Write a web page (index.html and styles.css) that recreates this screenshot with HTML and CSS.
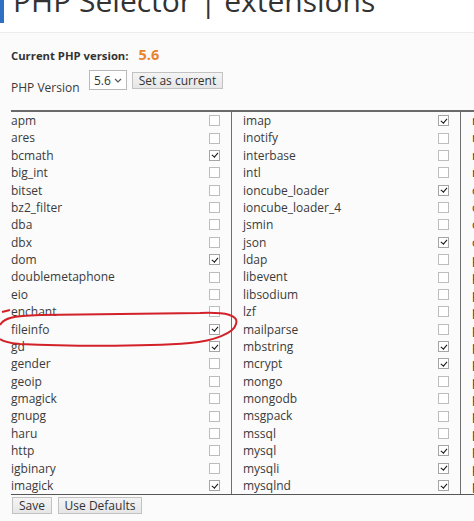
FILE: index.html
```html
<!DOCTYPE html>
<html>
<head>
<meta charset="utf-8">
<link rel="stylesheet" href="styles.css">
</head>
<body>
<header class="page-head">
  <div class="head-bar"></div>
  <h1 class="title">PHP Selector | extensions</h1>
</header>
<main class="content">
  <div class="current">
    <span class="current-label">Current PHP version:</span>
    <span class="current-value">5.6</span>
  </div>
  <div class="version-row">
    <label class="version-label">PHP Version</label>
    <div class="select">
      <span>5.6</span>
      <svg class="chev" width="8" height="5" viewBox="0 0 8 5"><path d="M1 1 L4 4 L7 1" fill="none" stroke="#555" stroke-width="1.2"/></svg>
    </div>
    <button class="btn set-btn">Set as current</button>
  </div>

  <div class="ext-table">
    <div class="ext-col col-first">
      <div class="ext-row"><span class="name">apm</span><span class="cb"></span></div>
      <div class="ext-row"><span class="name">ares</span><span class="cb"></span></div>
      <div class="ext-row"><span class="name">bcmath</span><span class="cb on"></span></div>
      <div class="ext-row"><span class="name">big_int</span><span class="cb"></span></div>
      <div class="ext-row"><span class="name">bitset</span><span class="cb"></span></div>
      <div class="ext-row"><span class="name">bz2_filter</span><span class="cb"></span></div>
      <div class="ext-row"><span class="name">dba</span><span class="cb"></span></div>
      <div class="ext-row"><span class="name">dbx</span><span class="cb"></span></div>
      <div class="ext-row"><span class="name">dom</span><span class="cb on"></span></div>
      <div class="ext-row"><span class="name">doublemetaphone</span><span class="cb"></span></div>
      <div class="ext-row"><span class="name">eio</span><span class="cb"></span></div>
      <div class="ext-row"><span class="name">enchant</span><span class="cb"></span></div>
      <div class="ext-row"><span class="name">fileinfo</span><span class="cb on"></span></div>
      <div class="ext-row"><span class="name">gd</span><span class="cb on"></span></div>
      <div class="ext-row"><span class="name">gender</span><span class="cb"></span></div>
      <div class="ext-row"><span class="name">geoip</span><span class="cb"></span></div>
      <div class="ext-row"><span class="name">gmagick</span><span class="cb"></span></div>
      <div class="ext-row"><span class="name">gnupg</span><span class="cb"></span></div>
      <div class="ext-row"><span class="name">haru</span><span class="cb"></span></div>
      <div class="ext-row"><span class="name">http</span><span class="cb"></span></div>
      <div class="ext-row"><span class="name">igbinary</span><span class="cb"></span></div>
      <div class="ext-row"><span class="name">imagick</span><span class="cb on"></span></div>
    </div>
    <div class="ext-col">
      <div class="ext-row"><span class="name">imap</span><span class="cb on"></span></div>
      <div class="ext-row"><span class="name">inotify</span><span class="cb"></span></div>
      <div class="ext-row"><span class="name">interbase</span><span class="cb"></span></div>
      <div class="ext-row"><span class="name">intl</span><span class="cb"></span></div>
      <div class="ext-row"><span class="name">ioncube_loader</span><span class="cb on"></span></div>
      <div class="ext-row"><span class="name">ioncube_loader_4</span><span class="cb"></span></div>
      <div class="ext-row"><span class="name">jsmin</span><span class="cb"></span></div>
      <div class="ext-row"><span class="name">json</span><span class="cb on"></span></div>
      <div class="ext-row"><span class="name">ldap</span><span class="cb"></span></div>
      <div class="ext-row"><span class="name">libevent</span><span class="cb"></span></div>
      <div class="ext-row"><span class="name">libsodium</span><span class="cb"></span></div>
      <div class="ext-row"><span class="name">lzf</span><span class="cb"></span></div>
      <div class="ext-row"><span class="name">mailparse</span><span class="cb"></span></div>
      <div class="ext-row"><span class="name">mbstring</span><span class="cb on"></span></div>
      <div class="ext-row"><span class="name">mcrypt</span><span class="cb on"></span></div>
      <div class="ext-row"><span class="name">mongo</span><span class="cb"></span></div>
      <div class="ext-row"><span class="name">mongodb</span><span class="cb"></span></div>
      <div class="ext-row"><span class="name">msgpack</span><span class="cb"></span></div>
      <div class="ext-row"><span class="name">mssql</span><span class="cb"></span></div>
      <div class="ext-row"><span class="name">mysql</span><span class="cb on"></span></div>
      <div class="ext-row"><span class="name">mysqli</span><span class="cb on"></span></div>
      <div class="ext-row"><span class="name">mysqlnd</span><span class="cb on"></span></div>
    </div>
    <div class="ext-col">
      <div class="ext-row"><span class="name">nd_mysql</span><span class="cb"></span></div>
      <div class="ext-row"><span class="name">nd_mysqli</span><span class="cb"></span></div>
      <div class="ext-row"><span class="name">nd_pdo_mysql</span><span class="cb"></span></div>
      <div class="ext-row"><span class="name">newrelic</span><span class="cb"></span></div>
      <div class="ext-row"><span class="name">oauth</span><span class="cb"></span></div>
      <div class="ext-row"><span class="name">oci8</span><span class="cb"></span></div>
      <div class="ext-row"><span class="name">odbc</span><span class="cb"></span></div>
      <div class="ext-row"><span class="name">opcache</span><span class="cb"></span></div>
      <div class="ext-row"><span class="name">pdf</span><span class="cb"></span></div>
      <div class="ext-row"><span class="name">pdo</span><span class="cb"></span></div>
      <div class="ext-row"><span class="name">pdo_dblib</span><span class="cb"></span></div>
      <div class="ext-row"><span class="name">pdo_firebird</span><span class="cb"></span></div>
      <div class="ext-row"><span class="name">pdo_mysql</span><span class="cb"></span></div>
      <div class="ext-row"><span class="name">pdo_oci</span><span class="cb"></span></div>
      <div class="ext-row"><span class="name">pdo_odbc</span><span class="cb"></span></div>
      <div class="ext-row"><span class="name">pdo_pgsql</span><span class="cb"></span></div>
      <div class="ext-row"><span class="name">pdo_sqlite</span><span class="cb"></span></div>
      <div class="ext-row"><span class="name">pgsql</span><span class="cb"></span></div>
      <div class="ext-row"><span class="name">phar</span><span class="cb"></span></div>
      <div class="ext-row"><span class="name">posix</span><span class="cb"></span></div>
      <div class="ext-row"><span class="name">propro</span><span class="cb"></span></div>
      <div class="ext-row"><span class="name">pspell</span><span class="cb"></span></div>
    </div>
  </div>

  <div class="actions">
    <button class="btn save-btn">Save</button>
    <button class="btn defaults-btn">Use Defaults</button>
  </div>
</main>

<svg class="annotation" width="474" height="521" viewBox="0 0 474 521">
  <path d="M0 325 C4 318 12 316 40 315 L200 313 C226 312 239 315 236 324 C234 333 214 341 190 343 C140 347 60 346 20 344 C8 343 2 341 0 339" fill="none" stroke="#d3212a" stroke-width="2"/>
  <path d="M2 312 L10 310" fill="none" stroke="#d3212a" stroke-width="2"/>
</svg>
</body>
</html>
```

FILE: styles.css
```css
html, body {
  margin: 0;
  padding: 0;
  overflow: hidden;
}

body {
  position: relative;
  width: 474px;
  height: 521px;
  background: #fbfbfb;
  font-family: "Open Sans", "DejaVu Sans", sans-serif;
  color: #3a3a3a;
}

.page-head {
  display: flex;
  align-items: flex-start;
  height: 32px;
  background: #ffffff;
  border-bottom: 1px solid #ececec;
  overflow: hidden;
}

.head-bar {
  width: 4px;
  height: 23px;
  background: #2f6fc4;
  flex: none;
}

.title {
  margin: -14px 0 0 9px;
  font-size: 30px;
  line-height: 30px;
  font-weight: 400;
  color: #333333;
  white-space: nowrap;
}

.content {
  padding: 12px 0 0 11px;
}

.current {
  display: flex;
  align-items: baseline;
  line-height: 20px;
  height: 20px;
}

.current-label {
  font-size: 11.3px;
  font-weight: 700;
  color: #333;
}

.current-value {
  margin-left: 10px;
  font-size: 14.5px;
  font-weight: 700;
  color: #e8842c;
}

.version-row {
  display: flex;
  align-items: flex-start;
  margin-top: 5px;
  height: 20px;
}

.version-label {
  width: 78px;
  margin-top: 10px;
  font-size: 12px;
  line-height: 16px;
  color: #3a3a3a;
}

.select {
  box-sizing: border-box;
  width: 38px;
  height: 20px;
  border: 1px solid #b9b9b9;
  background: #fff;
  display: flex;
  align-items: center;
  justify-content: space-between;
  padding: 0 4px 0 4px;
  font-size: 12px;
  color: #333;
}

.chev {
  display: block;
}

.btn {
  box-sizing: border-box;
  height: 17px;
  padding: 0;
  border: 1px solid #c2c2c2;
  background: linear-gradient(#f4f4f4, #e6e6e6);
  font-family: "Open Sans", "DejaVu Sans", sans-serif;
  font-size: 12px;
  line-height: 15px;
  color: #333;
}

.set-btn {
  width: 91px;
  margin: 2px 0 0 5px;
}

.ext-table {
  display: grid;
  grid-template-columns: 220px 229px 229px;
  margin-top: 20px;
  border-top: 2px solid #6a6a6a;
  border-bottom: 1px solid #555;
  width: 678px;
}

.ext-col {
  box-sizing: border-box;
  border-left: 1px solid #6f6f6f;
  padding: 0 11px;
}

.ext-col.col-first {
  border-left: none;
  padding: 0 11px 0 0;
}

.ext-row {
  display: flex;
  align-items: center;
  justify-content: space-between;
  height: 17.38px;
  font-size: 12px;
  line-height: 17.38px;
  white-space: nowrap;
}

.cb {
  box-sizing: border-box;
  width: 11px;
  height: 11px;
  border: 1px solid #bdbdbd;
  background: #fff;
  flex: none;
  position: relative;
}

.cb.on {
  border-color: #a5a5a5;
}

.cb.on::after {
  content: "";
  position: absolute;
  left: 2.5px;
  top: 0.5px;
  width: 2.5px;
  height: 5px;
  border-right: 1.7px solid #111;
  border-bottom: 1.7px solid #111;
  transform: rotate(40deg);
}

.actions {
  display: flex;
  gap: 6px;
  margin-top: 2px;
  padding-left: 1px;
}

.save-btn {
  width: 40px;
}

.defaults-btn {
  width: 84px;
}

.annotation {
  position: absolute;
  left: 0;
  top: 0;
  pointer-events: none;
}
```
